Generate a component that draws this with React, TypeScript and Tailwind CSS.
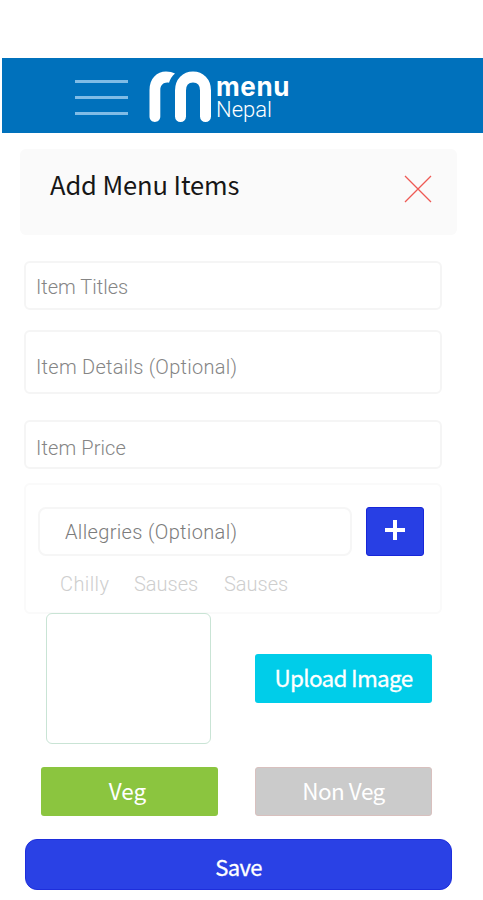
import { useState } from "react"

const Logo = () => (
  <svg width="64" height="54" viewBox="0 0 64 54" fill="none">
    <path d="M0.500 20C0.500 8.500 8 1.500 17 1.500C20.500 1.500 23.500 2.300 26 3.500C23 6.200 21 9.300 20 12.700C15.500 11.700 11.300 14.500 11.300 20V46.500C11.300 53.700 0.500 53.700 0.500 46.500Z" fill="#fff" />
    <path d="M31.500 46.500V20.500C31.500 12 37 7 44 7S56.500 12 56.500 20.500V46.500" stroke="#fff" strokeWidth="11" strokeLinecap="round" />
  </svg>
)

const campo = "w-[418px] rounded-md border-2 border-[#f5f5f5] bg-white px-2.5 font-['Roboto',sans-serif] font-light text-[20px] text-[#777] placeholder:text-[#858585] placeholder:opacity-100 outline-none"
const botao = "w-[177px] h-[49px] rounded-[3px] pb-[3px] text-white text-[22.5px] leading-[44px] text-center"

const App = () => {
  const [ titulo, setTitulo ] = useState<string>("")
  const [ detalhes, setDetalhes ] = useState<string>("")
  const [ preco, setPreco ] = useState<string>("")
  const [ alergia, setAlergia ] = useState<string>("")

  return (
    <main className="w-[483px] h-[900px] overflow-hidden bg-white pt-[58px] font-['Noto_Sans_CJK_SC',sans-serif]">
      <header className="ml-0.5 h-[75px] flex items-start bg-[#0071bc]">
        <button type="button" aria-label="Menu" className="ml-[73px] mt-[22px] w-[53px] flex flex-col gap-[13px]">
          <span className="h-[3px] w-full bg-[#80bce6]" />
          <span className="h-[3px] w-full bg-[#80bce6]" />
          <span className="h-[3px] w-full bg-[#80bce6]" />
        </button>
        <div className="ml-[21px] mt-[12px] flex">
          <Logo />
          <div className="ml-[3px] mt-[5px] flex flex-col text-white">
            <span className="font-['Inter',sans-serif] font-bold text-[26px] leading-[24px] tracking-[0.6px]">menu</span>
            <span className="font-['Roboto',sans-serif] font-light text-[22px] leading-[22px]">Nepal</span>
          </div>
        </div>
      </header>

      <section className="ml-5 mt-4 w-[437px] h-[86px] rounded-md bg-[#fafafa] flex items-start justify-between pl-[30px] pr-[25px]">
        <h1 className="mt-[17px] text-[25.5px] leading-[36px] tracking-[-0.1px] text-[#161616]">Add Menu Items</h1>
        <button type="button" aria-label="Close" className="mt-[26px]">
          <svg width="28" height="28" viewBox="0 0 28 28" stroke="#ee5a54" strokeWidth="1.3">
            <path d="M1 1L27 27M27 1L1 27" />
          </svg>
        </button>
      </section>

      <form className="ml-6 mt-[26px] flex flex-col items-start" onSubmit={(e) => e.preventDefault()}>
        <input value={titulo} onChange={(e) => setTitulo(e.target.value)} placeholder="Item Titles" className={`${campo} h-[49px] pt-0.5`} />
        <input value={detalhes} onChange={(e) => setDetalhes(e.target.value)} placeholder="Item Details (Optional)" className={`${campo} mt-5 h-[64px] pt-2.5 tracking-[0.26px]`} />
        <input value={preco} onChange={(e) => setPreco(e.target.value)} placeholder="Item Price" className={`${campo} mt-[26px] h-[49px] pt-1.5 tracking-[0.1px]`} />

        <div className="mt-[14px] w-[418px] h-[131px] rounded-md border-2 border-[#fafafa] pt-[22px] pl-3 font-['Roboto',sans-serif] font-light text-[20px]">
          <div className="flex">
            <input value={alergia} onChange={(e) => setAlergia(e.target.value)} placeholder="Allegries (Optional)" className="w-[314px] h-[49px] rounded-lg border-2 border-[#f6f6f6] pl-[25px] text-[#777] tracking-[0.35px] placeholder:text-[#7c7c7c] placeholder:opacity-100 outline-none" />
            <button type="button" aria-label="Add" className="ml-3.5 w-[58px] h-[49px] rounded-[3px] border border-[#1726d8] bg-[#283fe4] flex justify-center pt-[12px]">
              <svg width="20" height="20" viewBox="0 0 20 20" stroke="#fff" strokeWidth="4">
                <path d="M10 0V20M0 10H20" />
              </svg>
            </button>
          </div>
          <div className="mt-[15px] ml-[22px] flex leading-[26px] text-[#cecece]">
            <span className="w-[74px] tracking-[0.4px]">Chilly</span>
            <span className="w-[90px]">Sauses</span>
            <span>Sauses</span>
          </div>
        </div>

        <div className="-mt-px ml-[22px] flex items-start">
          <div className="w-[165px] h-[131px] rounded-md border border-[#c9e4d5] bg-white" />
          <button type="button" className={`${botao} ml-11 mt-[41px] bg-[#00cde9] [-webkit-text-stroke:0.3px_#fff] tracking-[-0.7px]`}>Upload Image</button>
        </div>

        <div className="mt-[23px] ml-[17px] flex gap-[37px]">
          <button type="button" className={`${botao} pr-1 bg-[#8bc53f]`}>Veg</button>
          <button type="button" className={`${botao} border border-[#d8c0be] bg-[#cbcbcb] tracking-[-0.5px]`}>Non Veg</button>
        </div>

        <button type="submit" className="mt-[23px] ml-px w-[427px] h-[51px] rounded-xl border border-[#1e2edc] bg-[#2a41e5] text-white text-[22px] leading-[52px] tracking-[-0.7px] [-webkit-text-stroke:0.3px_#fff]">Save</button>
      </form>
    </main>
  )
}

export default App
